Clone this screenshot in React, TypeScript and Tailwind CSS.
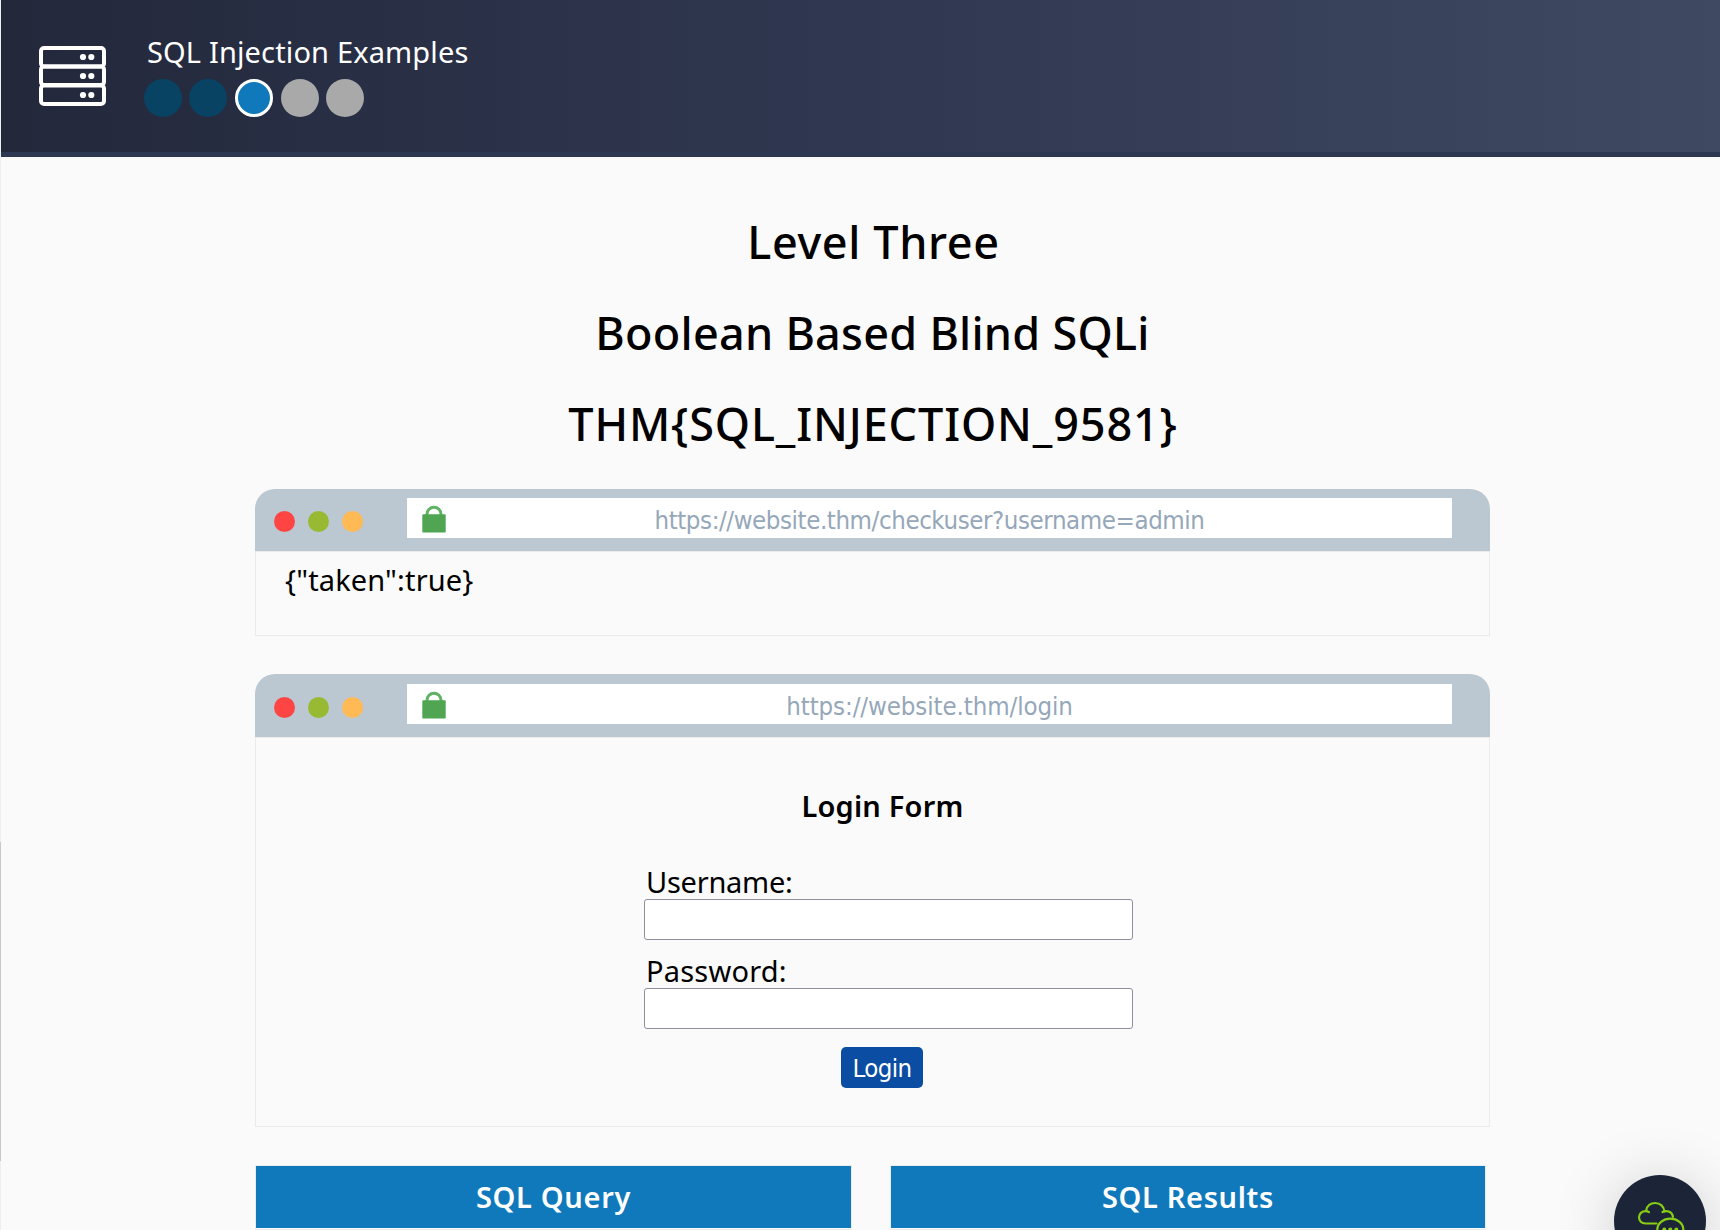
import type { ReactNode } from "react";

const UI = "font-['Noto_Sans',sans-serif]";
const FIELD = "font-['DejaVu_Sans_Condensed','DejaVu_Sans',sans-serif] [font-stretch:condensed]";

function ServerIcon() {
  return (
    <svg width="67" height="61" viewBox="0 0 67 61" fill="none" stroke="#fff" strokeWidth="4">
      <rect x="2" y="2" width="63" height="18.500" rx="3" />
      <rect x="2" y="20.500" width="63" height="18.500" rx="3" />
      <rect x="2" y="39.500" width="63" height="18.500" rx="3" />
      <g fill="#fff" stroke="none">
        {[11, 30, 49].map((y) => (
          <g key={y}>
            <circle cx="44" cy={y} r="3.1" />
            <circle cx="52.300" cy={y} r="3.1" />
          </g>
        ))}
      </g>
    </svg>
  );
}

function Header() {
  return (
    <header className="flex h-[157px] border-b-[5px] border-[#2e3751] bg-gradient-to-r from-[#23283b] via-[#303851] to-[#3f4961] bg-origin-border pl-[38px] text-white">
      <div className="mt-[46px] h-[62px] w-[68px]">
        <ServerIcon />
      </div>
      <div className="ml-[37px] pt-8">
        <div className="ml-[3px] h-10 text-[29px] leading-10 tracking-[0.15px] whitespace-nowrap">SQL Injection Examples</div>
        <div className="mt-[7px] flex">
          <span className="size-[38px] rounded-full bg-[#084363]" />
          <span className="ml-[7px] size-[38px] rounded-full bg-[#084363]" />
          <span className="ml-2 size-[38px] rounded-full border-3 border-white bg-[#1079bb]" />
          <span className="ml-2 size-[38px] rounded-full bg-[#a9a9a9]" />
          <span className="ml-[7px] size-[38px] rounded-full bg-[#a9a9a9]" />
        </div>
      </div>
    </header>
  );
}

function Lock() {
  return (
    <svg width="24" height="28" viewBox="0 0 24 28">
      <path d="M5 10V9.200a7 7 0 0 1 14 0V10" fill="none" stroke="#5fb262" strokeWidth="3" />
      <rect x="0.300" y="9.300" width="23.400" height="18.300" rx="1.200" fill="#4fa551" />
    </svg>
  );
}

function BrowserWindow({ url, bar, address, dots, children }: { url: string; bar: string; address: string; dots: string; children: ReactNode }) {
  return (
    <section>
      <div className={`flex rounded-t-[20px] bg-[#bbc7d1] pr-[38px] pl-[19px] ${bar}`}>
        <div className={`flex gap-[13px] ${dots}`}>
          <span className="size-[21px] rounded-full bg-[#ff4544]" />
          <span className="size-[21px] rounded-full bg-[#98ba32]" />
          <span className="size-[21px] rounded-full bg-[#ffba55]" />
        </div>
        <div className="ml-[44px] flex h-10 flex-1 items-start bg-white pl-[15px]">
          <div className="mt-[7px] w-6">
            <Lock />
          </div>
          <div className={`-ml-[39px] flex-1 text-center text-[25.6px] leading-[44px] text-[#95a7b9] ${FIELD} ${address}`}>{url}</div>
        </div>
      </div>
      {children}
    </section>
  );
}

function Field({ label, spacing, type }: { label: string; spacing: string; type: string }) {
  return (
    <label className="block">
      <span className={`block h-8 pl-[2px] text-[29px] leading-[30px] ${spacing}`}>{label}</span>
      <input type={type} className="block h-[41px] w-[489px] rounded-[3px] border border-[#8f8f9d] bg-white px-2 outline-none" />
    </label>
  );
}

function ChatBubble() {
  return (
    <div className="absolute top-[1175px] left-[1614px] size-[92px] rounded-full bg-[#1c2538] shadow-[0_8px_64px_rgba(0,0,0,0.2)]">
      <svg className="absolute top-[26px] left-[23px]" width="48" height="46" viewBox="0 0 48 46" fill="none" stroke="#88cc14" strokeWidth="2.2" strokeLinecap="round">
        <path d="M19.500 22.500H8.500C4.500 22.500 2 19.700 2 16.300c0-3.700 3-6.200 6.600-6.200 1.300 0 2.400.3 3.400 1" />
        <path d="M9.200 9.500C10 4.700 13.700 2 18.200 2c5 0 8.800 3.500 9.200 8.300" />
        <path d="M25.500 11c1.200-.7 2.200-.9 3.500-.9 3.800 0 6.500 2.500 7 5.900" />
        <ellipse cx="33.300" cy="28.500" rx="13" ry="10.800" />
        <path d="M24.500 36.500l-2.500 6 7-3.300" />
        <g fill="#88cc14" stroke="none">
          <circle cx="27.300" cy="28.500" r="2" />
          <circle cx="33.300" cy="28.500" r="2" />
          <circle cx="39.300" cy="28.500" r="2" />
        </g>
      </svg>
    </div>
  );
}

export default function App() {
  return (
    <div className={`relative flex h-[1230px] w-[1720px] overflow-hidden bg-[#fafafa] text-black ${UI}`}>
      <div className="flex w-px flex-col bg-[#efefef]">
        <div className="mt-[842px] h-[319px] bg-[#c8c8c8]" />
      </div>
      <div className="min-w-0 flex-1">
        <Header />
        <main className="ml-[254px] w-[1235px] pt-[39px]">
          <h1 className="h-[91px] pl-[2px] text-center text-[45px] leading-[91px] font-medium tracking-[0.6px]">Level Three</h1>
          <h1 className="h-[91px] text-center text-[45px] leading-[91px] font-medium tracking-[0.25px]">Boolean Based Blind SQLi</h1>
          <h1 className="h-[111px] pl-px text-center text-[45px] leading-[92px] font-medium tracking-[0.85px]">THM&#123;SQL_INJECTION_9581&#125;</h1>

          <BrowserWindow url="https://website.thm/checkuser?username=admin" bar="h-[62px] pt-[9px]" dots="pt-[13px]" address="tracking-[-0.42px]">
            <div className="h-[85px] border border-[#ebebeb] pt-[8px] pl-[29px] text-[29px] leading-10 tracking-[0.15px]">&#123;"taken":true&#125;</div>
          </BrowserWindow>

          <div className="h-[38px]" />

          <BrowserWindow url="https://website.thm/login" bar="h-[63px] pt-[10px]" dots="pt-[13px]" address="tracking-[-0.1px]">
            <div className="h-[390px] border border-[#ebebeb] pt-[47px] pl-[20px]">
              <form className="mx-auto flex w-[477px] flex-col">
                <h2 className="h-[82px] text-center text-[29px] leading-[41px] font-semibold tracking-[0.2px]">Login Form</h2>
                <Field label="Username:" spacing="tracking-[-0.25px]" type="text" />
                <div className="h-4" />
                <Field label="Password:" spacing="tracking-[0.2px]" type="password" />
                <button type="button" className={`mt-[18px] ml-[197px] h-[41px] w-[82px] rounded-[5px] bg-[#0a4da2] text-[25.6px] leading-[42px] tracking-[-0.6px] text-white ${FIELD}`}>Login</button>
              </form>
            </div>
          </BrowserWindow>

          <div className="mt-[38px] flex gap-[38px]">
            <div className="h-[65px] w-[597px] border border-[#ebebeb] bg-[#fafafa]">
              <div className="h-[62px] bg-[#1079bb] text-center text-[29px] leading-[61px] font-semibold tracking-[0.7px] text-white">SQL Query</div>
            </div>
            <div className="h-[65px] w-[596px] border border-[#ebebeb] bg-[#fafafa]">
              <div className="h-[62px] bg-[#1079bb] text-center text-[29px] leading-[61px] font-semibold tracking-[0.65px] text-white">SQL Results</div>
            </div>
          </div>
        </main>
      </div>
      <ChatBubble />
    </div>
  );
}
